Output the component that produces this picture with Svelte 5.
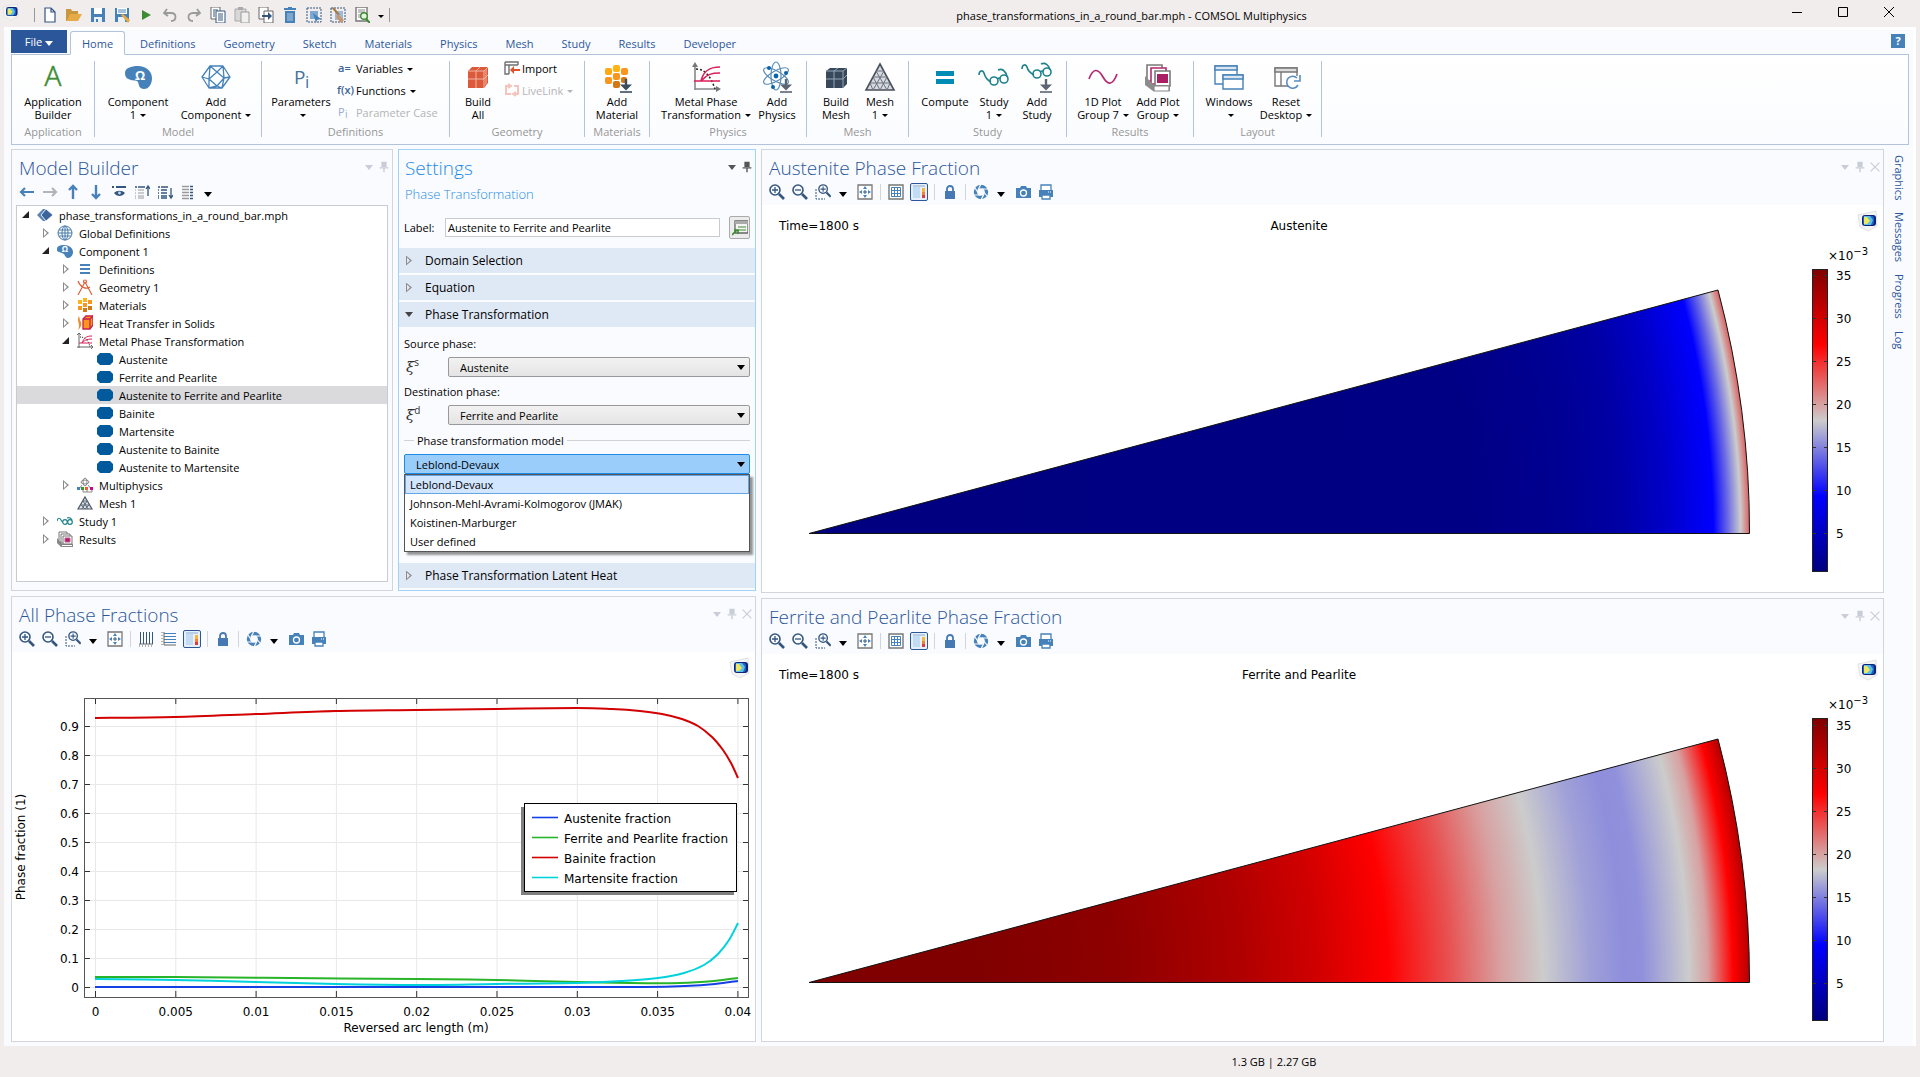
<script lang="ts">
  const quickTools = [
    { icon: 'new', label: 'New' },
    { icon: 'open', label: 'Open' },
    { icon: 'save', label: 'Save' },
    { icon: 'saveAs', label: 'Save As' },
    { icon: 'run', label: 'Run' },
    { icon: 'undo', label: 'Undo' },
    { icon: 'redo', label: 'Redo' },
    { icon: 'copy', label: 'Copy' },
    { icon: 'paste', label: 'Paste' },
    { icon: 'duplicate', label: 'Duplicate' },
    { icon: 'trash', label: 'Delete' },
    { icon: 'selectBox', label: 'Select' },
    { icon: 'clearBox', label: 'Clear selection' },
    { icon: 'find', label: 'Find' },
  ];

  const tabs = ['Home', 'Definitions', 'Geometry', 'Sketch', 'Materials', 'Physics', 'Mesh', 'Study', 'Results', 'Developer'];
  let activeTab = $state('Home');

  type Item = { icon: string; lines: string[]; caret?: boolean; w: number };
  type Small = { icon: string; text: string; caret?: boolean; disabled?: boolean };
  type Group = { title: string; w: number; pad?: number; items: Item[]; small?: Small[] };

  const groups: Group[] = [
    { title: 'Application', w: 83, items: [{ icon: 'appBuilder', lines: ['Application', 'Builder'], w: 82 }] },
    {
      title: 'Model', w: 167, pad: 8,
      items: [
        { icon: 'component', lines: ['Component', '1'], caret: true, w: 70 },
        { icon: 'addComponent', lines: ['Add', 'Component'], caret: true, w: 86 },
      ],
    },
    {
      title: 'Definitions', w: 188,
      items: [{ icon: 'parameters', lines: ['Parameters', ''], caret: true, w: 78 }],
      small: [
        { icon: 'variables', text: 'Variables', caret: true },
        { icon: 'functions', text: 'Functions', caret: true },
        { icon: 'paramCase', text: 'Parameter Case', disabled: true },
      ],
    },
    {
      title: 'Geometry', w: 135,
      items: [{ icon: 'buildAll', lines: ['Build', 'All'], w: 56 }],
      small: [
        { icon: 'import', text: 'Import' },
        { icon: 'liveLink', text: 'LiveLink', caret: true, disabled: true },
      ],
    },
    { title: 'Materials', w: 65, items: [{ icon: 'addMaterial', lines: ['Add', 'Material'], w: 64 }] },
    {
      title: 'Physics', w: 157, pad: 10,
      items: [
        { icon: 'metalPhase', lines: ['Metal Phase', 'Transformation'], caret: true, w: 92 },
        { icon: 'addPhysics', lines: ['Add', 'Physics'], w: 50 },
      ],
    },
    {
      title: 'Mesh', w: 102,
      items: [
        { icon: 'buildMesh', lines: ['Build', 'Mesh'], w: 58 },
        { icon: 'mesh', lines: ['Mesh', '1'], caret: true, w: 30 },
      ],
    },
    {
      title: 'Study', w: 158, pad: 8,
      items: [
        { icon: 'compute', lines: ['Compute'], w: 56 },
        { icon: 'study', lines: ['Study', '1'], caret: true, w: 42 },
        { icon: 'addStudy', lines: ['Add', 'Study'], w: 44 },
      ],
    },
    {
      title: 'Results', w: 127, pad: 8,
      items: [
        { icon: 'plot1d', lines: ['1D Plot', 'Group 7'], caret: true, w: 56 },
        { icon: 'addPlot', lines: ['Add Plot', 'Group'], caret: true, w: 54 },
      ],
    },
    {
      title: 'Layout', w: 128, pad: 5,
      items: [
        { icon: 'windows', lines: ['Windows', ''], caret: true, w: 60 },
        { icon: 'resetDesktop', lines: ['Reset', 'Desktop'], caret: true, w: 54 },
      ],
    },
  ];

  const tree = [
    { level: 0, open: true, icon: 'root', text: 'phase_transformations_in_a_round_bar.mph' },
    { level: 1, open: false, icon: 'globe', text: 'Global Definitions' },
    { level: 1, open: true, icon: 'componentSmall', text: 'Component 1' },
    { level: 2, open: false, icon: 'defs', text: 'Definitions' },
    { level: 2, open: false, icon: 'geometry', text: 'Geometry 1' },
    { level: 2, open: false, icon: 'materials', text: 'Materials' },
    { level: 2, open: false, icon: 'heat', text: 'Heat Transfer in Solids' },
    { level: 2, open: true, icon: 'metalSmall', text: 'Metal Phase Transformation' },
    { level: 3, icon: 'pill', text: 'Austenite' },
    { level: 3, icon: 'pill', text: 'Ferrite and Pearlite' },
    { level: 3, icon: 'pill', text: 'Austenite to Ferrite and Pearlite' },
    { level: 3, icon: 'pill', text: 'Bainite' },
    { level: 3, icon: 'pill', text: 'Martensite' },
    { level: 3, icon: 'pill', text: 'Austenite to Bainite' },
    { level: 3, icon: 'pill', text: 'Austenite to Martensite' },
    { level: 2, open: false, icon: 'multiphysics', text: 'Multiphysics' },
    { level: 2, icon: 'meshSmall', text: 'Mesh 1' },
    { level: 1, open: false, icon: 'studySmall', text: 'Study 1' },
    { level: 1, open: false, icon: 'resultsSmall', text: 'Results' },
  ];
  let selected = $state(10);

  const treeTools = ['left', 'right', 'up', 'down', 'show', 'collapse', 'expand', 'columns'];
  const models = ['Leblond-Devaux', 'Johnson-Mehl-Avrami-Kolmogorov (JMAK)', 'Koistinen-Marburger', 'User defined'];
  let model = $state(models[0]);

  const surfaceTools = ['zoomIn', 'zoomOut', 'zoomBox', 'caret', 'fit', 'sep', 'grid', 'legend', 'sep', 'lock', 'sep', 'shutter', 'caret', 'camera', 'print'];
  const lineTools = ['zoomIn', 'zoomOut', 'zoomBox', 'caret', 'fit', 'sep', 'gridX', 'gridY', 'legend', 'sep', 'lock', 'sep', 'shutter', 'caret', 'camera', 'print'];

  const surfaces = [
    {
      id: 'austenite',
      title: 'Austenite Phase Fraction',
      caption: 'Austenite',
      top: 70,
      stops: [
        [0, '#000080'], [0.7, '#000084'], [0.8, '#000092'], [0.86, '#0000a4'], [0.911, '#0000c8'],
        [0.961, '#0000ff'], [0.976, '#6666e6'], [0.99, '#cccccc'], [1, '#dc5c5c'],
      ],
    },
    {
      id: 'ferrite',
      title: 'Ferrite and Pearlite Phase Fraction',
      caption: 'Ferrite and Pearlite',
      top: 71,
      stops: [
        [0, '#800000'], [0.18, '#800000'], [0.33, '#8e0000'], [0.46, '#b00000'], [0.54, '#d00000'],
        [0.615, '#ff0000'], [0.68, '#e85050'], [0.735, '#d8a0a0'], [0.78, '#cccccc'], [0.83, '#a0a0d8'],
        [0.865, '#8e8edc'], [0.885, '#9090dc'], [0.935, '#cccccc'], [0.955, '#d8a0a0'], [0.982, '#ff0000'], [1, '#b40000'],
      ],
    },
  ];
  const scale = [35, 30, 25, 20, 15, 10, 5];

  // plot area of the line chart: pixel origin and step per tick
  const xTicks = ['0', '0.005', '0.01', '0.015', '0.02', '0.025', '0.03', '0.035', '0.04'];
  const yTicks = ['0', '0.1', '0.2', '0.3', '0.4', '0.5', '0.6', '0.7', '0.8', '0.9'];
  const tx = (i: number) => 83.5 + i * 80.3;
  const ty = (i: number) => 335.5 - i * 29;

  const series = [
    { name: 'Austenite fraction', color: '#1440e6', pts: [[83, 335], [243, 335], [443, 335], [563, 335], [633, 335], [673, 334], [703, 332], [726, 329]] },
    { name: 'Ferrite and Pearlite fraction', color: '#28b428', pts: [[83, 325], [163, 325], [279, 326], [404, 327], [484, 328], [565, 330], [618, 331], [668, 331], [702, 329], [726, 326]] },
    { name: 'Bainite fraction', color: '#d20000', pts: [[83, 66], [163, 65], [244, 62], [323, 59], [404, 58], [484, 57], [565, 56], [600, 57], [628, 59], [650, 62], [670, 67], [686, 74], [700, 85], [711, 98], [719, 111], [726, 126]] },
    { name: 'Martensite fraction', color: '#00d2dc', pts: [[83, 327], [163, 328], [244, 330], [323, 332], [404, 333], [484, 332], [565, 331], [610, 329], [646, 326], [672, 321], [692, 313], [706, 302], [717, 288], [726, 271]] },
  ];

  // Catmull-Rom through the points, written as cubic Béziers
  function smooth(p: number[][]) {
    let d = `M${p[0][0]} ${p[0][1]}`;
    for (let i = 0; i < p.length - 1; i++) {
      const a = p[i - 1] ?? p[i];
      const b = p[i];
      const c = p[i + 1];
      const e = p[i + 2] ?? c;
      d += `C${b[0] + (c[0] - a[0]) / 6} ${b[1] + (c[1] - a[1]) / 6} ${c[0] - (e[0] - b[0]) / 6} ${c[1] - (e[1] - b[1]) / 6} ${c[0]} ${c[1]}`;
    }
    return d;
  }

  const addArrow = '<path d="M25 18v7" stroke="#3c4c5c" stroke-width="2.4"/><path d="M19 23.500h12l-6 6z" fill="#3c4c5c"/><path d="M19 31h12" stroke="#3c4c5c" stroke-width="1.600"/>';

  // 32 x 32 drawings of the ribbon
  const big: Record<string, string> = {
    appBuilder: '<text x="16" y="25" font-size="28" font-weight="300" text-anchor="middle" fill="#3c8c32" stroke="#3c8c32" stroke-width=".6">A</text>',
    component: '<path d="M3 12C3 7 9 5 16 5c8 0 14 5 14 12 0 6-3 11-8 11-5 0-5-4-6-7-1-2-4-1-7-2-4-1-6-3-6-7z" fill="#4682b9"/><text x="18" y="19" font-size="13" font-weight="700" text-anchor="middle" fill="#fff">Ω</text>',
    addComponent: '<g fill="none" stroke="#4682b9" stroke-width="1.3" stroke-linejoin="round"><path d="M2 16L10 5h13l7 11-8 11H9zM10 5l7 6 6-6M17 11l-8 7 8 7 7-8zM2 16l7 2v9M30 16l-6 1-2 10-5-2-8 2M10 5l-1 13M23 5l1 12"/></g>',
    parameters: '<text x="9" y="23" font-size="19" fill="#46739f">P</text><text x="20" y="27" font-size="17" fill="#46739f">i</text>',
    buildAll: '<path d="M6 10l4-4h16v16l-4 5H6z" fill="#dc5a3c"/><path d="M6 10h16l4-4M22 10v17M14 10v17M6 18h16l4-4M14 10l4-4M24 8v16" fill="none" stroke="#f4b4a2" stroke-width="1"/>',
    addMaterial: '<g fill="#fa961e"><rect x="12" y="4" width="7" height="7" rx="2" fill="#ffb414"/><rect x="4" y="7" width="7" height="7" rx="2" fill="#ffaa14"/><rect x="20" y="7" width="7" height="7" rx="2"/><rect x="12" y="12" width="7" height="7" rx="2"/><rect x="4" y="16" width="7" height="7" rx="2"/><rect x="20" y="16" width="6" height="6" rx="2" fill="#d27814"/><rect x="12" y="20" width="7" height="7" rx="2" fill="#d27814"/></g>' + addArrow,
    metalPhase: '<path d="M5 29V4M5 28h24" stroke="#888" stroke-width="1.6"/><path d="M5 1l3 5H2zM31 28l-5-3v6z" fill="#777"/><path d="M6 8c9 0 15 8 19 20" fill="none" stroke="#222" stroke-width="1.5" stroke-dasharray="2 2"/><path d="M30 6C18 6 13 11 11 20M30 12c-8 0-13 1-19 8M4 20h26" fill="none" stroke="#dc1e5a" stroke-width="1.6"/>',
    addPhysics: '<g fill="none" stroke="#5a8cb4" stroke-width="1.2"><ellipse cx="15" cy="15" rx="5" ry="14"/><ellipse cx="15" cy="15" rx="5" ry="14" transform="rotate(60 15 15)"/><ellipse cx="15" cy="15" rx="5" ry="14" transform="rotate(120 15 15)"/></g><g fill="#0a64aa"><circle cx="15" cy="15" r="2.4"/><circle cx="8" cy="7" r="2"/><circle cx="25" cy="12" r="2"/><circle cx="12" cy="26" r="2"/></g>' + addArrow.replaceAll('#3c4c5c', '#5a6472'),
    buildMesh: '<path d="M6 10l4-3h17v16l-4 4H6z" fill="#37485a"/><path d="M6 10h17l4-3M23 10v17M14 10v17M6 18h17l4-4M14 10l4-3" fill="none" stroke="#93a6b8" stroke-width="1"/>',
    mesh: '<path d="M16 3l14 26H2z" fill="#d6d9dd" stroke="#4a4f5a" stroke-width="1.6"/><path d="M12 10h8M9 16h14M6 22h20M12 10l11 19M20 10L9 29M9 16l7 13M23 16l-7 13M6 22l3 7M26 22l-3 7" stroke="#6c7480" stroke-width="1" fill="none"/>',
    compute: '<path d="M7 10h18v5H7zM7 18h18v5H7z" fill="#008cb4"/>',
    study: '<g fill="none" stroke="#1e828c" stroke-width="1.6"><path d="M1 14c0-5 4-5 5-2 1 4 3 7 7 9"/><circle cx="16" cy="20" r="4"/><circle cx="26" cy="18" r="4"/><path d="M19 18c1-1 2-1 3-1M20 9c4-2 8 1 9 7"/></g>',
    addStudy: '<g fill="none" stroke="#1e828c" stroke-width="1.6"><path d="M1 8c0-5 4-5 5-2 1 4 3 6 7 8"/><circle cx="16" cy="13" r="4"/><circle cx="26" cy="11" r="4"/><path d="M19 11c1-1 2-1 3-1M20 3c4-2 8 1 9 6"/></g>' + addArrow.replaceAll('#3c4c5c', '#5a6472'),
    plot1d: '<path d="M2 18C6 7 11 7 16 16s10 8 14-3" fill="none" stroke="#b4286e" stroke-width="1.7"/>',
    addPlot: '<g fill="#fff" stroke="#7a7a7a" stroke-width="1.6"><path d="M5 4h15v16H5z"/><path d="M9 7h15v16H9z" stroke="#b4286e"/><path d="M13 10h15v15H13z"/></g><path d="M15 13h11v9H15z" fill="#aa1e64"/><path d="M3 15v9l8 6h17v-6H12z" fill="#8c8c8c"/><path d="M12 25h15v5H12z" fill="#fff" stroke="#888" stroke-width="1.2"/>',
    windows: '<g fill="#fff" stroke="#4682b9" stroke-width="1.4"><path d="M2 5h22v18H2z"/><path d="M2 5h22v4H2z" fill="#dbe6f2"/><path d="M10 14h20v14H10z"/><path d="M10 14h20v4H10z" fill="#dbe6f2"/></g>',
    resetDesktop: '<g fill="#fff" stroke="#777" stroke-width="1.4"><path d="M5 7h22v18H5z"/><path d="M5 7h22v4H5z" fill="#dcdcdc"/><path d="M11 11v14"/></g><path d="M18 15h12v12H18z" fill="#fff"/><path d="M27 17a6 6 0 1 0 1 7" fill="none" stroke="#5a8cc0" stroke-width="1.6"/><path d="M30 14v6h-6" fill="none" stroke="#5a8cc0" stroke-width="1.6"/>',
  };

  const cluster = '<g fill="#fa961e"><path d="M6 1h4v4H6zM1 3h4v4H1z" fill="#ffb41e"/><path d="M11 3h4v4h-4zM6 6h4v4H6zM1 9h4v4H1z"/><path d="M11 9h4v4h-4zM6 11h4v4H6z" fill="#d27814"/></g>';
  const omega = '<path d="M0 6c0-3 3-4 7-4 5 0 9 3 9 7s-3 6-5 6-3-2-4-4c-1-1-3-1-5-2S0 8 0 6z" fill="#4682b9"/><text x="8" y="9" font-size="8" font-weight="700" text-anchor="middle" fill="#fff">Ω</text>';
  const lens = (sign: string) => `<circle cx="6" cy="6" r="5" fill="none" stroke="#34567e" stroke-width="1.6"/><path d="M10 10l5 5" stroke="#34567e" stroke-width="2.6"/><path d="${sign}" stroke="#34567e" stroke-width="1.3"/>`;

  // 16 x 16 drawings
  const small: Record<string, string> = {
    new: '<path d="M3 1h6l4 4v10H3zM9 1v4h4" fill="#fff" stroke="#34567e" stroke-width="1.2"/>',
    open: '<path d="M0 2h5l1 2h6v3H5L1 14H0z" fill="#c8963c"/><path d="M4 7h12l-4 7H1z" fill="#e6aa46"/>',
    save: '<path d="M1 1h14v14H1z" fill="#4682b9"/><path d="M4 1h8v6H4z" fill="#fff"/><path d="M4 10h8v5H4z" fill="#e8f0f8"/><path d="M6 12h2v3H6z" fill="#4682b9"/>',
    saveAs: '<path d="M1 1h14v14H1z" fill="#4682b9"/><path d="M3 1h10v6H3z" fill="#fff"/><path d="M4 3h8M4 5h8" stroke="#4682b9"/><path d="M4 10h7v5H4z" fill="#e8f0f8"/><path d="M7 8l2-1 7 6-2 3z" fill="#e6aa46"/>',
    run: '<path d="M4 3l9 5-9 5z" fill="#3c8c32"/>',
    undo: '<path d="M5 2L2 6l4 3M2 6h7c6 0 6 8 0 8" fill="none" stroke="#9a9a9a" stroke-width="1.8"/>',
    redo: '<path d="M11 2l3 4-4 3M14 6H7c-6 0-6 8 0 8" fill="none" stroke="#9a9a9a" stroke-width="1.8"/>',
    copy: '<path d="M1 0h9v12H1z" fill="#fff" stroke="#666"/><path d="M6 4h9v12H6z" fill="#fff" stroke="#34567e"/><path d="M3 3h5M3 5h2M3 7h2M3 9h2M8 7h5M8 9h5M8 11h5M8 13h5" stroke="#34567e"/>',
    paste: '<path d="M1 2h11v12H1z" fill="#d8d8d8" stroke="#aaa"/><path d="M4 0h5v3H4z" fill="#aaa"/><path d="M7 5h8v11H7z" fill="#f0f0f0" stroke="#999"/>',
    duplicate: '<path d="M1 0h9v12H1z" fill="#fff" stroke="#666"/><path d="M6 4h9v12H6z" fill="#fff" stroke="#666"/><path d="M4 8h6V5l4 4-4 4v-3H4z" fill="#34567e"/>',
    trash: '<path d="M2 2h12M6 1h4" stroke="#4682b9" stroke-width="2"/><path d="M3 4h10v12H3z" fill="#4682b9"/><path d="M6 6v8M8 6v8M10 6v8" stroke="#b4cde4"/>',
    selectBox: '<path d="M1 1h14v14H1z" fill="none" stroke="#34567e" stroke-dasharray="2 1"/><path d="M4 4h8v8H4z" fill="#7fa8d0"/><path d="M7 6l8 6-4 1-1 3z" fill="#4682b9"/>',
    clearBox: '<path d="M1 1h14v14H1z" fill="none" stroke="#34567e" stroke-dasharray="2 1"/><path d="M5 4h8v9H5z" fill="#9bbbdc"/><path d="M3 1l6 7" stroke="#a87838" stroke-width="2"/><path d="M8 7l6 6-3 3-5-6z" fill="#c8966e"/>',
    find: '<path d="M2 0h11v14H2z" fill="#fff" stroke="#777" stroke-width="1.4"/><path d="M4 3h7M4 5h7M4 8h3M4 10h3" stroke="#888"/><circle cx="10" cy="9" r="3.3" fill="#e6f2e0" stroke="#3c8c32" stroke-width="1.4"/><path d="M12 12l4 4" stroke="#3c8c32" stroke-width="2"/>',
    variables: '<text x="0" y="12" font-size="11" font-weight="600" fill="#3c6496">a=</text>',
    functions: '<text x="-1" y="12" font-size="11" font-weight="600" fill="#3c6496">f(x)</text>',
    paramCase: '<text x="0" y="12" font-size="11" fill="#93add0">P</text><text x="7" y="14" font-size="10" fill="#93add0">i</text>',
    import: '<path d="M1 2h13v3M1 2v12h4M1 5h13M5 5v9" fill="none" stroke="#707070" stroke-width="1.4"/><path d="M6 10l4-4v3h6v2h-6v3z" fill="#e0502d"/>',
    liveLink: '<path d="M6 4H2v8h4M4 12l3 0M10 4h4v8h-4M4 2l3 2-3 2M12 14l-3-2 3-2" fill="none" stroke="#f5c4bc" stroke-width="2"/>',
    left: '<path d="M15 8H2M6 4L2 8l4 4" stroke="#4682b9" stroke-width="2.2" fill="none"/>',
    right: '<path d="M1 8h13M10 4l4 4-4 4" stroke="#b4b4b4" stroke-width="2.2" fill="none"/>',
    up: '<path d="M8 15V2M4 6l4-4 4 4" stroke="#4682b9" stroke-width="2.4" fill="none"/>',
    down: '<path d="M8 1v13M4 10l4 4 4-4" stroke="#4682b9" stroke-width="2.4" fill="none"/>',
    show: '<path d="M1 3h2M5 3h10" stroke="#34567e" stroke-width="2"/><path d="M3 9c3-3 8-3 11 0-3 4-8 4-11 0z" fill="#34567e"/><circle cx="8.500" cy="9" r="1.400" fill="#cfdaea"/>',
    collapse: '<path d="M1 3h2M4 3h7" stroke="#34567e" stroke-width="1.600"/><path d="M1 6h1M4 6h6M1 9h1M4 9h6M1 12h1M4 12h6M1 14h1M4 14h6" stroke="#9a9a9a"/><path d="M14 12V3M12 5l2-3 2 3" stroke="#34567e" fill="none" stroke-width="1.300"/>',
    expand: '<path d="M1 3h2M4 3h7M1 6h1M4 6h6M1 9h1M4 9h6M1 12h1M4 12h6M1 14h1M4 14h6" stroke="#34567e" stroke-width="1.300"/><path d="M14 4v10M12 11l2 3 2-3" stroke="#34567e" fill="none" stroke-width="1.300"/>',
    columns: '<path d="M2 2.500h7M2 5.500h7M2 8.500h7M2 11.500h7M2 14.500h7" stroke="#9a9a9a" stroke-width="1.400"/><path d="M10 2.500h3M10 5.500h3M10 8.500h3M10 11.500h3M10 14.500h3" stroke="#34567e" stroke-width="1.600"/>',
    root: '<path d="M0 8l6-6h3L4 8l5 6H6z" fill="#5a82b4"/><path d="M4 8l5-6 7 6-7 6z" fill="#3c649b" stroke="#fff" stroke-width=".8"/>',
    globe: '<g fill="#fff" stroke="#4678aa"><circle cx="8" cy="8" r="7"/><ellipse cx="8" cy="8" rx="3" ry="7"/><path d="M1 8h14M2 5h12M2 11h12M8 1v14"/></g>',
    componentSmall: omega,
    defs: '<path d="M3 4h10M3 8h10M3 12h10" stroke="#4682b9" stroke-width="2"/>',
    geometry: '<g fill="none" stroke="#dc643c" stroke-width="1.200"><path d="M8 3L1 16M8 3l7 13M1 2c2 6 8 9 12 6"/><circle cx="8" cy="2.500" r="1.500"/></g>',
    materials: cluster,
    heat: '<path d="M2 1c-3 5 2 8-1 14 4-3 4-7 2-10z" fill="#f08c28"/><path d="M6 4l3-3h7v9l-3 4H6z" fill="#fa961e" stroke="#c81e50" stroke-width="1.300"/><path d="M6 4h7v10M13 4l3-3" fill="none" stroke="#c81e50" stroke-width="1.300"/>',
    metalSmall: '<path d="M2 15V1M0 14h16" stroke="#666"/><path d="M0 2l2-2 2 2M14 12l2 2-2 2" fill="none" stroke="#666"/><path d="M3 4c6 0 9 5 10 10" fill="none" stroke="#222" stroke-dasharray="1 1"/><path d="M15 3c-6 0-8 2-10 7M15 6c-6 0-8 2-10 4M2 10h13" fill="none" stroke="#dc1e5a"/>',
    pill: '<path d="M3 2h10l3 3v6l-3 3H3l-3-3V5z" fill="#005a9b"/>',
    multiphysics: '<g fill="none" stroke="#888"><ellipse cx="8" cy="5" rx="2" ry="4"/><ellipse cx="8" cy="5" rx="4" ry="2"/><path d="M5 8L2 12M11 8l3 4M6 13v2h9v-2M10 13v2"/></g><path d="M0 10h3v3H0z" fill="#4682b9"/><path d="M4 10h3v3H4z" fill="#3c9632"/><path d="M8 10h3v3H8z" fill="#e66432"/><path d="M13 10h3v3h-3z" fill="#d20082"/>',
    meshSmall: '<path d="M8 2l7 12H1z" fill="#dde0e4" stroke="#4a5564" stroke-width="1.200"/><path d="M6 6h4M4 10h8M6 6l5 8M10 6l-5 8M4 10l4 4 4-4" fill="none" stroke="#5d6a7a"/>',
    studySmall: '<g fill="none" stroke="#1e828c" stroke-width="1.200"><path d="M0 8c1-4 3-3 4-1s1 2 2 2"/><circle cx="8" cy="9" r="2.300"/><circle cx="13" cy="9" r="2.300"/><path d="M10 5c2-1 4 0 5 2"/></g>',
    resultsSmall: '<path d="M0 7v5l4 4h12v-3H5z" fill="#888"/><g fill="#fff" stroke="#777"><path d="M2 1h8v10H2z"/><path d="M4 3h9v9H4z"/><path d="M6 5h9v8H6z"/></g><path d="M8 7h5v4H8z" fill="#aa1e64" stroke="#c85a90"/><path d="M5 14h10v1H5z" fill="#fff"/>',
    zoomIn: lens('M3 6h6M6 3v6'),
    zoomOut: lens('M3 6h6'),
    zoomBox: '<path d="M1 5v10h9" fill="none" stroke="#34567e" stroke-dasharray="2 1"/><g transform="translate(3 0) scale(.85)">' + lens('M3 6h6M6 3v6') + '</g>',
    fit: '<path d="M1 1h14v14H1z" fill="#fff" stroke="#777" stroke-width="1.300"/><path d="M8 2l2 3H6zM8 14l2-3H6zM2 8l3-2v4zM14 8l-3-2v4z" fill="#4682b9"/><path d="M8 6v4M6 8h4" stroke="#34567e"/>',
    grid: '<path d="M1 1h14v14H1z" fill="#fff" stroke="#777" stroke-width="1.400"/><path d="M3.500 3.500h9v9h-9zM6.500 3.500v9M9.500 3.500v9M3.500 6.500h9M3.500 9.500h9" fill="none" stroke="#4682b9"/>',
    gridX: '<path d="M2.500 1v12M5.500 1v12M8.500 1v12M11.500 1v12M14.500 1v12" stroke="#34567e"/><path d="M1 13h14" stroke="#666"/><path d="M1 15h14" stroke="#666" stroke-dasharray="1 2"/>',
    gridY: '<path d="M3 2.500h12M3 5.500h12M3 8.500h12M3 11.500h12" stroke="#4682b9"/><path d="M3 1v13h12" stroke="#666" fill="none"/><path d="M1 1v13" stroke="#666" stroke-dasharray="1 2"/>',
    legend: '<path d="M0 0h16v16H0z" fill="#e6f0fa"/><path d="M2 3h7v11H2z" fill="#c3dcf5"/><path d="M2 2h12" stroke="#8caacd"/><path d="M11 4h3v4h-3z" fill="#fab43c"/><path d="M11 8h3v3h-3z" fill="#f08232"/><path d="M11 11h3v3h-3z" fill="#dc3c3c"/>',
    lock: '<path d="M3 7h10v8H3z" fill="#4678b4"/><path d="M5 7V5c0-4 6-4 6 0v2" fill="none" stroke="#4678b4" stroke-width="1.800"/>',
    shutter: '<circle cx="8" cy="8" r="5.500" fill="none" stroke="#4682b9" stroke-width="3.400"/><path d="M8 0L5 6M15 5L9 5M14 12l-4-5M8 16l3-6M1 11h6M2 4l4 6" stroke="#fafbff" stroke-width="1.200"/>',
    camera: '<path d="M1 4h4l1-2h5l1 2h4v10H1z" fill="#4682b9"/><circle cx="8.500" cy="9" r="3" fill="none" stroke="#fff" stroke-width="1.300"/>',
    print: '<path d="M3 1h10v6H3z" fill="#fff" stroke="#4682b9" stroke-width="1.300"/><path d="M1 6h14v7H1z" fill="#4682b9"/><path d="M4 11h8v4H4z" fill="#fff" stroke="#4682b9" stroke-width="1.300"/><path d="M10 8h1M12 8h1" stroke="#fff"/>',
    rename: '<path d="M3 1h13v12H3z" fill="#f4f4f4" stroke="#666" stroke-width="1.300"/><path d="M3 1h13v3H3z" fill="#aaa"/><path d="M6 7h8M6 10h8" stroke="#3c8c32"/><path d="M0 15l5-5M2 10h4v4" stroke="#3c8c32" stroke-width="1.600" fill="none"/>',
    pin: '<path d="M5 2h6v6H5z" fill="currentColor"/><path d="M3 9h10M8 9v5" stroke="currentColor" stroke-width="1.600"/>',
    close: '<path d="M3 3l10 10M13 3L3 13" stroke="currentColor" stroke-width="1.400"/>',
  };
</script>

{#snippet icon(name: string)}
  <svg class="icon" viewBox="0 0 16 16" aria-hidden="true">{@html small[name]}</svg>
{/snippet}

{#snippet logo()}
  <svg class="logo" viewBox="0 0 22 22" aria-hidden="true">
    <path d="M1 5l18-4 1 15-9 5-8-4z" fill="#f4f4f4" stroke="#e2e2e2" />
    <rect x="5" y="5" width="14" height="11" rx="3" fill="#0f2378" />
    <rect x="6" y="6" width="11" height="9" rx="2" fill="#1e64c8" />
    <path d="M7 6h6l3 4-2 5H7z" fill="#5abee6" />
    <path d="M7 7h3l3 4-3 3H7z" fill="#f0e65a" />
  </svg>
{/snippet}

{#snippet panelHead(title: string, closable: boolean)}
  <header class="panel-head">
    <h2>{title}</h2>
    <div class="panel-actions">
      <button class="flat" aria-label="Menu"><span class="arrow"></span></button>
      <button class="flat" aria-label="Pin">{@render icon('pin')}</button>
      {#if closable}
        <button class="flat" aria-label="Close">{@render icon('close')}</button>
      {/if}
    </div>
  </header>
{/snippet}

{#snippet toolbar(tools: string[])}
  <div class="toolbar" role="toolbar">
    {#each tools as t}
      {#if t === 'sep'}
        <span class="tool-sep"></span>
      {:else if t === 'caret'}
        <button class="flat tool-caret" aria-label="More"><span class="arrow"></span></button>
      {:else}
        <button class="flat tool" class:pressed={t === 'legend'} aria-label={t}>{@render icon(t)}</button>
      {/if}
    {/each}
  </div>
{/snippet}

<div class="app">
  <div class="titlebar">
    <span class="app-logo">{@render logo()}</span>
    <span class="bar-sep"></span>
    {#each quickTools as q}
      <button class="flat quick" aria-label={q.label}>{@render icon(q.icon)}</button>
    {/each}
    <button class="flat quick-more" aria-label="Customize"><span class="caret"></span></button>
    <span class="bar-sep last"></span>
    <h1>phase_transformations_in_a_round_bar.mph - COMSOL Multiphysics</h1>
    <button class="flat win" aria-label="Minimize"><svg viewBox="0 0 12 12"><path d="M1 6.500h10" /></svg></button>
    <button class="flat win" aria-label="Maximize"><svg viewBox="0 0 12 12"><path d="M1.500 1.500h9v9h-9z" /></svg></button>
    <button class="flat win" aria-label="Close"><svg viewBox="0 0 12 12"><path d="M1 1l10 10M11 1L1 11" /></svg></button>
  </div>

  <div class="frame">
    <nav class="tabs">
      <button class="file">File <span class="arrow"></span></button>
      {#each tabs as t}
        <button class="tab" class:active={activeTab === t} onclick={() => (activeTab = t)}>{t}</button>
      {/each}
      <button class="help" aria-label="Help">?</button>
    </nav>

    <div class="ribbon">
      {#each groups as g}
        <section class="group" style="width: {g.w}px">
          <div class="group-body" style="padding-left: {g.pad ?? 0}px">
            {#each g.items as it}
              <button class="flat big" style="width: {it.w}px">
                <svg class="big-icon" viewBox="0 0 32 32" aria-hidden="true">{@html big[it.icon]}</svg>
                {#each it.lines as line, i}
                  <span class="line">{line}{#if it.caret && i === it.lines.length - 1}<span class="caret"></span>{/if}</span>
                {/each}
              </button>
            {/each}
            {#if g.small}
              <div class="small-list">
                {#each g.small as s}
                  <button class="flat small" disabled={s.disabled}>
                    {@render icon(s.icon)}
                    <span>{s.text}{#if s.caret}<span class="caret"></span>{/if}</span>
                  </button>
                {/each}
              </div>
            {/if}
          </div>
          <div class="group-title">{g.title}</div>
        </section>
      {/each}
    </div>

    <main class="workspace">
      <div class="left">
        <div class="upper">
          <section class="panel builder">
            {@render panelHead('Model Builder', false)}
            <div class="toolbar tree-tools" role="toolbar">
              {#each treeTools as t}
                <button class="flat tool" aria-label={t}>{@render icon(t)}</button>
              {/each}
              <button class="flat tool-caret" aria-label="More"><span class="arrow"></span></button>
            </div>
            <ul class="tree" role="tree">
              {#each tree as node, i}
                <li
                  class="node"
                  class:selected={i === selected}
                  role="treeitem"
                  aria-selected={i === selected}
                  style="padding-left: {3 + node.level * 20}px"
                >
                  <span class="expander" class:open={node.open === true} class:closed={node.open === false}></span>
                  {@render icon(node.icon)}
                  <button class="flat node-text" onclick={() => (selected = i)}>{node.text}</button>
                </li>
              {/each}
            </ul>
          </section>

          <section class="panel settings">
            {@render panelHead('Settings', false)}
            <h3>Phase Transformation</h3>
            <div class="label-row">
              <label for="node-label">Label:</label>
              <input id="node-label" type="text" value="Austenite to Ferrite and Pearlite" />
              <button class="rename" aria-label="Rename">{@render icon('rename')}</button>
            </div>
            <button class="flat section"><span class="twist"></span>Domain Selection</button>
            <button class="flat section"><span class="twist"></span>Equation</button>
            <button class="flat section"><span class="twist down"></span>Phase Transformation</button>
            <div class="form">
              <label for="source">Source phase:</label>
              <div class="field">
                <span class="symbol">ξ<sup>s</sup></span>
                <div class="select">
                  <select id="source"><option>Austenite</option></select>
                  <span class="arrow"></span>
                </div>
              </div>
              <label for="dest">Destination phase:</label>
              <div class="field">
                <span class="symbol">ξ<sup>d</sup></span>
                <div class="select">
                  <select id="dest"><option>Ferrite and Pearlite</option></select>
                  <span class="arrow"></span>
                </div>
              </div>
              <label class="rule" for="model">Phase transformation model</label>
              <div class="select focused">
                <select id="model" bind:value={model}>
                  {#each models as m}<option>{m}</option>{/each}
                </select>
                <span class="arrow"></span>
                <ul class="options" role="listbox">
                  {#each models as m}
                    <li role="option" aria-selected={m === model}>
                      <button class="flat" onclick={() => (model = m)}>{m}</button>
                    </li>
                  {/each}
                </ul>
              </div>
            </div>
            <button class="flat section"><span class="twist"></span>Phase Transformation Latent Heat</button>
          </section>
        </div>

        <section class="panel plot">
          {@render panelHead('All Phase Fractions', true)}
          {@render toolbar(lineTools)}
          <div class="canvas">
            <span class="mark">{@render logo()}</span>
            <svg viewBox="0 0 743 388" role="img" aria-label="All Phase Fractions">
              {#each xTicks as t, i}
                <path class="gridline" d="M{tx(i)} 46V345" />
                <path class="tick" d="M{tx(i)} 46v6M{tx(i)} 345v-6" />
                <text x={tx(i)} y="364" text-anchor="middle">{t}</text>
              {/each}
              {#each yTicks as t, i}
                <path class="gridline" d="M72 {ty(i)}H737" />
                <path class="tick" d="M72 {ty(i)}h6M737 {ty(i)}h-6" />
                <text x="67" y={ty(i) + 4} text-anchor="end">{t}</text>
              {/each}
              <rect class="axes" x="72.500" y="46.500" width="664" height="299" />
              {#each series as s}
                <path d={smooth(s.pts)} fill="none" stroke={s.color} stroke-width="2" />
              {/each}
              <text x="404" y="380" text-anchor="middle">Reversed arc length (m)</text>
              <text transform="translate(13 195) rotate(-90)" text-anchor="middle">Phase fraction (1)</text>
              <rect x="509" y="155" width="213" height="88" fill="#808080" />
              <rect x="512.500" y="151.500" width="212" height="88" fill="#fff" stroke="#000" />
              {#each series as s, i}
                <path d="M520 {165.5 + i * 20}h26" stroke={s.color} stroke-width="1.600" />
                <text x="552" y={171 + i * 20}>{s.name}</text>
              {/each}
            </svg>
          </div>
        </section>
      </div>

      <div class="right">
        {#each surfaces as s}
          <section class="panel plot">
            {@render panelHead(s.title, true)}
            {@render toolbar(surfaceTools)}
            <div class="canvas">
              <span class="mark">{@render logo()}</span>
              <svg viewBox="0 0 1121 387" role="img" aria-label={s.title}>
                <defs>
                  <radialGradient id={s.id} gradientUnits="userSpaceOnUse" cx="47" cy="328" r="941">
                    {#each s.stops as [o, c]}<stop offset={o} stop-color={c} />{/each}
                  </radialGradient>
                  <linearGradient id="{s.id}-bar" x1="0" y1="0" x2="0" y2="1">
                    <stop offset="0" stop-color="#800000" />
                    <stop offset="0.25" stop-color="#ff0000" />
                    <stop offset="0.5" stop-color="#cccccc" />
                    <stop offset="0.75" stop-color="#0000ff" />
                    <stop offset="1" stop-color="#000080" />
                  </linearGradient>
                </defs>
                <text x="17" y="25">Time=1800 s</text>
                <text x="537" y="25" text-anchor="middle">{s.caption}</text>
                <path d="M47 328.500L956 85A941 941 0 0 1 987.500 328.500z" fill="url(#{s.id})" stroke="#111" />
                <text x="1066" y="55">×10<tspan dy="-5" font-size="10">−3</tspan></text>
                <rect x="1050.500" y="64.500" width="15" height="302" fill="url(#{s.id}-bar)" stroke="#222" />
                {#each scale as v, i}
                  <path class="tick" d="M1051 {s.top + 0.5 + i * 43}h3M1065 {s.top + 0.5 + i * 43}h-3" />
                  <text x="1074" y={s.top + 5 + i * 43}>{v}</text>
                {/each}
              </svg>
            </div>
          </section>
        {/each}
      </div>

      <nav class="side">
        {#each ['Graphics', 'Messages', 'Progress', 'Log'] as t}
          <button class="flat side-tab">{t}</button>
        {/each}
      </nav>
    </main>
  </div>

  <footer class="status">1.3 GB | 2.27 GB</footer>
</div>

<style>
  :global(body) {
    margin: 0;
    background: #f0edec;
  }
  .app {
    display: flex;
    flex-direction: column;
    min-height: 100vh;
    font-family: 'Open Sans', 'Noto Sans', sans-serif;
    font-size: 11px;
    line-height: 13px;
    color: #000;
  }
  .app :global(*) {
    box-sizing: border-box;
  }
  button, input, select {
    font: inherit;
    color: inherit;
  }
  h1, h2, h3, ul {
    margin: 0;
    padding: 0;
    font-weight: 400;
  }
  ul { list-style: none; }
  .flat {
    padding: 0;
    border: none;
    background: none;
  }
  .icon {
    display: block;
    flex: none;
    width: 16px;
    height: 16px;
  }
  .logo {
    display: block;
    width: 22px;
    height: 22px;
  }
  .arrow {
    display: inline-block;
    border: 4px solid transparent;
    border-top: 5px solid currentColor;
    border-bottom: none;
  }
  .caret {
    display: inline-block;
    margin-left: 4px;
    vertical-align: 2px;
    border: 3px solid transparent;
    border-top: 3px solid currentColor;
    border-bottom: none;
  }

  /* title bar */
  .titlebar {
    display: flex;
    align-items: center;
    height: 27px;
    padding: 3px 8px 0 2px;
  }
  .app-logo {
    width: 32px;
    margin-top: -6px;
  }
  .app-logo .logo {
    width: 18px;
    height: 18px;
  }
  .bar-sep {
    width: 4px;
    height: 14px;
    border-left: 1px solid #999;
  }
  .bar-sep.last { margin-left: 5px; }
  .quick {
    display: flex;
    justify-content: center;
    width: 24px;
  }
  .quick-more { width: 10px; }
  h1 {
    flex: 1;
    padding-left: 96px;
    text-align: center;
    font-size: 11px;
  }
  .win {
    width: 46px;
    height: 24px;
    margin-top: -4px;
  }
  .win svg {
    width: 12px;
    height: 12px;
    fill: none;
    stroke: #000;
  }

  .frame {
    flex: 1;
    display: flex;
    flex-direction: column;
    margin: 0 4px;
    padding: 0 4px 4px 7px;
    border: 3px solid #fff;
    border-left: none;
    border-bottom: none;
    background: #fafbff;
  }

  /* tabs */
  .tabs {
    display: flex;
    height: 24px;
    padding-right: 4px;
  }
  .file {
    width: 56px;
    height: 23px;
    margin-right: 3px;
    padding: 0;
    border: none;
    background: #2b579a;
    color: #fff;
  }
  .tab {
    position: relative;
    height: 24px;
    margin-top: 1px;
    padding: 0 13px;
    border: 1px solid transparent;
    background: none;
    color: #2b579a;
  }
  .tab.active {
    margin-right: 1px;
    padding: 0 11px;
    border-color: #b4c3dc;
    border-bottom-color: #fff;
    border-radius: 3px 3px 0 0;
    background: #fff;
    z-index: 1;
  }
  .help {
    width: 14px;
    height: 14px;
    margin: 4px 0 0 auto;
    padding: 0;
    border: none;
    background: #4682b9;
    color: #fff;
    font-weight: 700;
    line-height: 14px;
  }

  /* ribbon */
  .ribbon {
    display: flex;
    height: 91px;
    padding: 6px 0 7px;
    border: 1px solid #b4c3dc;
    background: linear-gradient(#fff, #fbfcff);
  }
  .group {
    display: flex;
    flex-direction: column;
    flex: none;
    border-right: 1px solid #b4c3dc;
  }
  .group-body {
    flex: 1;
    display: flex;
    align-items: flex-start;
  }
  .big {
    display: flex;
    flex-direction: column;
    align-items: center;
  }
  .big-icon {
    width: 32px;
    height: 32px;
    margin-bottom: 2px;
    overflow: visible;
  }
  .line {
    height: 13px;
    white-space: nowrap;
  }
  .small-list {
    display: flex;
    flex-direction: column;
    gap: 6px;
    margin: -1px 0 0 -2px;
  }
  .small {
    display: flex;
    align-items: center;
    gap: 2px;
    height: 16px;
    white-space: nowrap;
  }
  .small:disabled { color: #b4b4b4; }
  .small .icon { overflow: visible; }
  .group-title {
    height: 10px;
    line-height: 10px;
    text-align: center;
    color: #969696;
  }

  /* workspace */
  .workspace {
    flex: 1;
    display: grid;
    grid-template-columns: 745fr 1123fr 20px;
    gap: 5px;
    margin-top: 4px;
  }
  .left, .right {
    display: grid;
    gap: 5px;
    min-width: 0;
  }
  .left { grid-template-rows: 442fr 446fr; }
  .right { grid-template-rows: 1fr 1fr; }
  .upper {
    display: grid;
    grid-template-columns: 382fr 358fr;
    gap: 5px;
  }
  .panel {
    display: flex;
    flex-direction: column;
    min-width: 0;
    padding-top: 4px;
    border: 1px solid #d2d5dc;
  }
  .panel-head {
    display: flex;
    justify-content: space-between;
    height: 28px;
    padding: 0 1px 0 7px;
    color: #2b579a;
  }
  h2 {
    font-size: 19px;
    font-weight: 300;
    line-height: 28px;
  }
  .panel-actions {
    display: flex;
    height: 26px;
    align-items: center;
    color: #c8cdd7;
  }
  .panel-actions button {
    display: flex;
    justify-content: center;
    width: 15px;
  }
  .panel-actions .icon {
    width: 14px;
    height: 14px;
  }
  .toolbar {
    display: flex;
    align-items: center;
    height: 20px;
    margin-bottom: 3px;
    padding-left: 3px;
  }
  .tool {
    display: flex;
    justify-content: center;
    width: 23px;
  }
  .pressed .icon {
    outline: 1px solid #2b579a;
    border-radius: 1px;
  }
  .tool-caret { width: 19px; padding-right: 2px; }
  .tool-sep {
    width: 8px;
    height: 16px;
    background: linear-gradient(#d2d5dc, #d2d5dc) center / 1px 100% no-repeat;
  }

  /* tree */
  .tree {
    flex: 1;
    margin: 0 4px 8px;
    border: 1px solid #c8cbd2;
    background: #fff;
  }
  .node {
    display: flex;
    align-items: center;
    height: 18px;
  }
  .node.selected { background: #dadadc; }
  .expander {
    width: 12px;
    height: 12px;
    margin-right: 5px;
  }
  .expander.open { background: #222; clip-path: polygon(9px 2px, 9px 9px, 2px 9px); }
  .expander.closed { background: #8c8c8c; clip-path: polygon(evenodd, 3px 1px, 9px 6px, 3px 11px, 3px 1px, 4px 3px, 7px 6px, 4px 9px, 4px 3px); }
  .node-text { padding-left: 6px; }

  /* settings */
  .settings {
    border-color: #a0d2fa;
  }
  .settings .panel-head, .settings h3 { color: #1e8ce6; }
  .settings .panel-actions { color: #555; }
  .settings .panel-head { padding-left: 6px; }
  h3 {
    height: 34px;
    padding: 3px 6px 0;
    font-size: 13px;
    font-weight: 300;
    line-height: 18px;
  }
  .label-row {
    display: flex;
    align-items: center;
    height: 23px;
    margin-bottom: 9px;
    padding: 0 5px;
  }
  .label-row label { width: 41px; }
  .label-row input {
    flex: 1;
    height: 19px;
    margin-right: 9px;
    padding: 0 2px;
    border: 1px solid #c8cbd2;
    background: #fff;
  }
  .rename {
    width: 21px;
    height: 23px;
    padding: 2px;
    border: 1px solid #aaa;
    border-radius: 2px;
    background: #ececec;
  }
  .section {
    display: flex;
    align-items: center;
    flex: none;
    height: 25px;
    margin-bottom: 2px;
    background: #dfe8f5;
    font-size: 12px;
  }
  .twist {
    width: 6px;
    height: 10px;
    margin: 0 13px 0 7px;
    background: #8c8c8c;
    clip-path: polygon(evenodd, 0 0, 6px 5px, 0 10px, 0 0, 1px 2px, 4px 5px, 1px 8px, 1px 2px);
  }
  .twist.down {
    width: 8px;
    height: 5px;
    margin: 0 12px 0 6px;
    background: #444;
    clip-path: polygon(0 0, 8px 0, 4px 5px);
  }
  .form {
    flex: 1;
    display: flex;
    flex-direction: column;
    padding: 8px 5px 0;
  }
  .form label {
    height: 20px;
  }
  .field {
    display: flex;
    height: 20px;
    margin-bottom: 8px;
  }
  .symbol {
    width: 44px;
    padding-left: 2px;
    font-family: 'DejaVu Serif', serif;
    font-style: italic;
    font-size: 15px;
    line-height: 18px;
    color: #333;
  }
  .symbol sup {
    font-family: 'Open Sans', sans-serif;
    font-style: normal;
    font-size: 10px;
    line-height: 10px;
  }
  .select {
    position: relative;
    flex: 1;
  }
  select {
    display: block;
    width: 100%;
    height: 20px;
    padding: 0 11px;
    appearance: none;
    border: 1px solid #999;
    border-radius: 2px;
    background: linear-gradient(#f2f2f2, #e4e4e4);
  }
  .select > .arrow {
    position: absolute;
    right: 5px;
    top: 8px;
    pointer-events: none;
  }
  .select.focused { flex: none; }
  .focused select {
    border-color: #1e8ce6;
    background: #9bcdfa;
  }
  .form label.rule {
    display: flex;
    align-items: center;
    gap: 3px;
    height: 14px;
    margin-bottom: 7px;
  }
  .rule::before, .rule::after {
    content: '';
    width: 10px;
    height: 1px;
    background: #d2d2d6;
  }
  .rule::after { flex: 1; }
  .options {
    position: absolute;
    left: 0;
    right: 0;
    top: 20px;
    z-index: 2;
    border: 1px solid #555;
    background: #fff;
    box-shadow: 3px 3px 2px rgba(80, 80, 80, 0.6);
  }
  .options li {
    height: 19px;
    border: 1px solid transparent;
  }
  .options li[aria-selected='true'] {
    border-color: #64a5e6;
    background: #d2e6ff;
  }
  .options button {
    width: 100%;
    height: 17px;
    padding-left: 4px;
    text-align: left;
  }

  /* plots */
  .canvas {
    position: relative;
    flex: 1;
    background: #fff;
  }
  .canvas > svg {
    display: block;
    width: 100%;
    font-family: 'DejaVu Sans', sans-serif;
    font-size: 12px;
  }
  .mark {
    position: absolute;
    top: 5px;
    right: 4px;
  }
  .gridline { stroke: #e8e8e8; }
  .tick { stroke: #333; }
  .axes { fill: none; stroke: #555; }

  .side {
    display: flex;
    flex-direction: column;
    align-items: center;
    gap: 12px;
    padding-top: 6px;
  }
  .side-tab {
    writing-mode: vertical-rl;
    color: #2b579a;
  }

  .status {
    height: 32px;
    padding: 9px 0 0 628px;
    text-align: center;
  }
</style>
